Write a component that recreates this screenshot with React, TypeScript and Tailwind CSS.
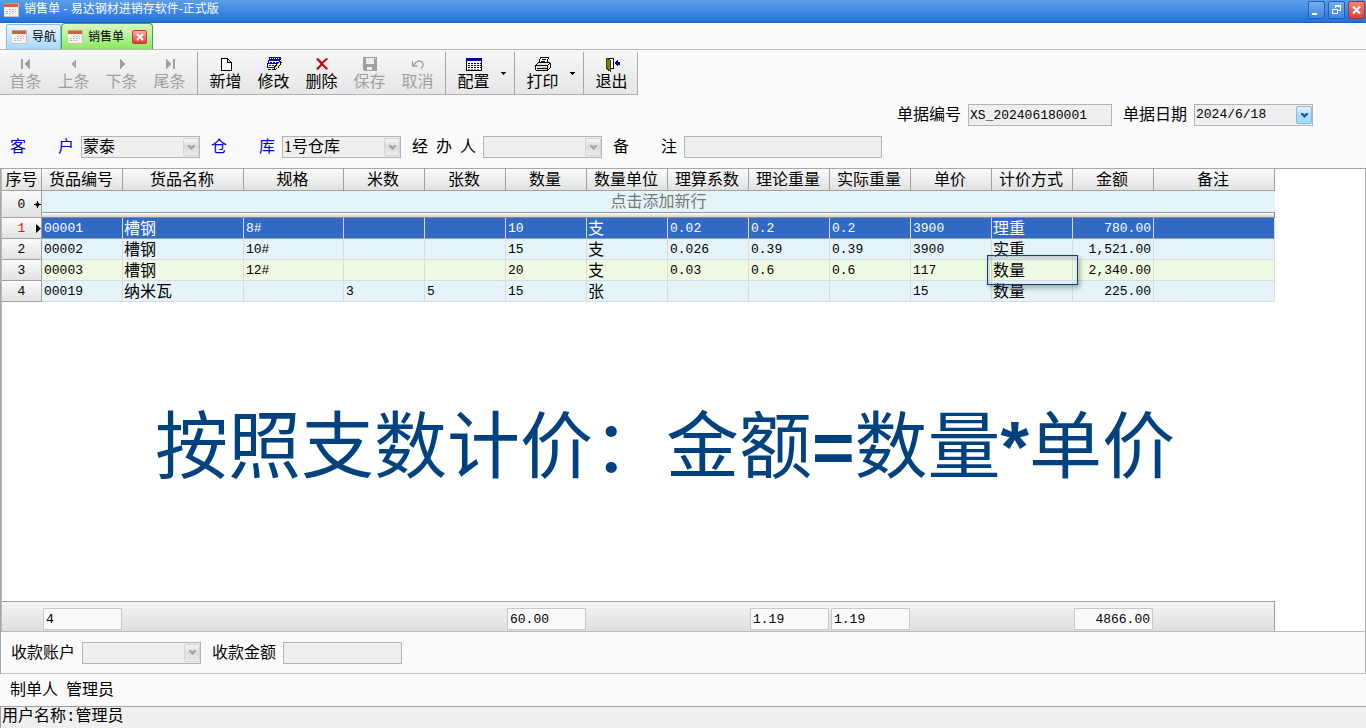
import { useState, type ReactNode } from "react";
import clsx from "clsx";

const mono = "[font-family:'Liberation_Mono','Noto_Sans_CJK_SC',monospace] text-[13px]";

type Column = { key: string; title: string; width: number; align?: "right" };

const columns: Column[] = [
  { key: "code", title: "货品编号", width: 81 },
  { key: "name", title: "货品名称", width: 121 },
  { key: "spec", title: "规格", width: 100 },
  { key: "meters", title: "米数", width: 81 },
  { key: "sheets", title: "张数", width: 81 },
  { key: "qty", title: "数量", width: 81 },
  { key: "unit", title: "数量单位", width: 81 },
  { key: "factor", title: "理算系数", width: 81 },
  { key: "theory", title: "理论重量", width: 81 },
  { key: "actual", title: "实际重量", width: 81 },
  { key: "price", title: "单价", width: 81 },
  { key: "mode", title: "计价方式", width: 81 },
  { key: "amount", title: "金额", width: 81, align: "right" },
  { key: "remark", title: "备注", width: 121 },
];

const rows: Record<string, string>[] = [
  { code: "00001", name: "槽钢", spec: "8#", qty: "10", unit: "支", factor: "0.02", theory: "0.2", actual: "0.2", price: "3900", mode: "理重", amount: "780.00" },
  { code: "00002", name: "槽钢", spec: "10#", qty: "15", unit: "支", factor: "0.026", theory: "0.39", actual: "0.39", price: "3900", mode: "实重", amount: "1,521.00" },
  { code: "00003", name: "槽钢", spec: "12#", qty: "20", unit: "支", factor: "0.03", theory: "0.6", actual: "0.6", price: "117", mode: "数量", amount: "2,340.00" },
  { code: "00019", name: "纳米瓦", meters: "3", sheets: "5", qty: "15", unit: "张", price: "15", mode: "数量", amount: "225.00" },
];

const totals: Record<string, string> = {
  code: "4",
  qty: "60.00",
  theory: "1.19",
  actual: "1.19",
  amount: "4866.00",
};

const isCjk = (text: string) => /[\u4e00-\u9fff]/.test(text);

function FormIcon() {
  return (
    <svg width="16" height="16" viewBox="0 0 16 16" className="shrink-0" shapeRendering="crispEdges">
      <rect x="1" y="1" width="15" height="14" fill="#c8c0ba" />
      <rect x="1" y="1" width="14" height="13" fill="#f7f3ee" />
      <rect x="1" y="1" width="14" height="4" fill="#c9683a" />
      <rect x="1" y="1" width="14" height="1" fill="#dd9468" />
      <path d="M6 7.500h7M3 9.500h10M3 11.500h7" stroke="#b9b4bd" strokeDasharray="2 1" />
    </svg>
  );
}

const icons: Record<string, ReactNode> = {
  first: <path d="M3 3h2v10H3zM12 3v10L6 8z" fill="#a0a0a0" />,
  prev: <path d="M10 3v10L5 8z" fill="#a0a0a0" />,
  next: <path d="M6 3v10l5-5z" fill="#a0a0a0" />,
  last: <path d="M11 3h2v10h-2zM4 3v10l6-5z" fill="#a0a0a0" />,
  add: <path d="M3.500 2.500h6l4 4v8h-10zM9.500 2.500v4h4" fill="#fff" stroke="#000" />,
  edit: (
    <>
      <path d="M3 1h12v3H3z" fill="#0000c8" />
      <path d="M2.500 4.500h11v3h-11zM1.500 7.500h11v4h-11z" fill="#fff" stroke="#0000c8" />
      <path d="M4 2.500h10" stroke="#fff" strokeDasharray="1 1" />
      <path d="M4 6h8M3 9.500h6" stroke="#0000c8" strokeDasharray="2 1" />
      <path d="M2 13.500h7" stroke="#000" strokeDasharray="3 1" />
      <path d="M13.500 5.500l2 1-4 6-3 1 .5-3z" fill="#ffff50" stroke="#000" />
    </>
  ),
  remove: (
    <path d="M2 3l2-1 4 4c2-2 4-4 5-4l1 1-5 4.500 5 5-1.500 1.500L8 9.500 4 14l-2-1 4.500-5z" fill="#c80000" />
  ),
  save: (
    <>
      <path d="M1 1h14v14H2l-1-1z" fill="#a0a0a0" />
      <path d="M4 2h8v6H4zM5 11h5v3H5z" fill="#eee" />
      <path d="M13 2h1v1h-1z" fill="#eee" />
    </>
  ),
  undo: <path d="M2.500 5v5h5M3 9.500l3-3c2-2 5-2 6.500 0 1 2 .5 4-1.500 6" fill="none" stroke="#a0a0a0" strokeWidth="1.300" />,
  config: (
    <>
      <path d="M.5 2.500h15v12H.5z" fill="#fff" stroke="#000" />
      <path d="M0 2h16v3H0z" fill="#0000a0" />
      <path d="M2 7.500h13M2 9.500h13M2 11.500h13" stroke="#000" strokeDasharray="2 1" />
      <path d="M2 13h12" stroke="#777" strokeDasharray="2 1" />
    </>
  ),
  print: (
    <>
      <path d="M5.500 1.500h8l-2 6h-8z" fill="#fff" stroke="#000" />
      <path d="M7 3.500h4M6 5.500h4" stroke="#000" />
      <path d="M.5 9.500l3-3h11l1 1v4l-3 3h-11l-1-1z" fill="#e4e4e4" stroke="#000" />
      <path d="M1 9.500h11l3-2M12.500 10v4M2 12.500h10" stroke="#000" fill="none" />
      <path d="M7 11h3" stroke="#d8d800" />
    </>
  ),
  exit: (
    <>
      <path d="M2.500 2.500h7v10h-7z" fill="#fff" stroke="#000" />
      <path d="M2 2l4 2v11l-4-3z" fill="#808000" stroke="#404000" />
      <path d="M10 7l4-4v3h2v3h-2v2z" fill="#0000a0" />
    </>
  ),
};

function ToolButton({ icon, label, disabled }: { icon: string; label: string; disabled?: boolean }) {
  return (
    <button
      type="button"
      disabled={disabled}
      className={clsx("flex w-12 flex-col items-center pl-px pt-1", disabled ? "text-[#a0a0a0]" : "text-black")}
    >
      <svg
        width="16"
        height="16"
        viewBox="0 0 16 16"
        shapeRendering={icon === "undo" || icon === "remove" ? "auto" : "crispEdges"}
      >
        {icons[icon]}
      </svg>
      <span className="text-base leading-5">{label}</span>
    </button>
  );
}

function DropArrow({ label }: { label: string }) {
  return (
    <button type="button" aria-label={label} className="flex w-[13px] items-center justify-center">
      <svg width="5" height="3" viewBox="0 0 5 3" shapeRendering="crispEdges">
        <path d="M0 0h5L2.500 3z" fill="#000" />
      </svg>
    </button>
  );
}

function Divider() {
  return <span className="ml-1 mr-[3px] w-px bg-[#a8a8a8]" />;
}

function FieldLabel({ id, text, blue }: { id: string; text: string; blue?: boolean }) {
  return (
    <label htmlFor={id} className={clsx("mr-[7px] flex w-16 justify-between", blue && "text-[#0000c8]")}>
      {text.split("").map((char) => (
        <span key={char}>{char}</span>
      ))}
    </label>
  );
}

const boxStyle = "h-[22px] appearance-none rounded-none border border-[#b4b4b4] bg-[#efefef] px-px leading-5 text-black outline-none";

function SelectBox({ id, value, active }: { id: string; value: string; active?: boolean }) {
  return (
    <span className="relative mr-[11px] flex">
      <select id={id} defaultValue={value} className={clsx(boxStyle, "w-[119px]", active && mono)}>
        <option>{value}</option>
      </select>
      <span
        className={clsx(
          "pointer-events-none absolute right-px top-0.5 flex h-[18px] w-4 items-center justify-center rounded-xs border",
          active
            ? "border-[#8ab8e6] bg-linear-to-b from-[#e8f5ff] via-[#b4dcfa] to-[#a0e0fc]"
            : "border-[#d4d4d4] bg-linear-to-b from-[#f6f6f6] via-[#dcdcdc] to-[#ececec]",
        )}
      >
        <svg width="7" height="5" viewBox="0 0 7 5">
          <path d="M0 0h2l1.500 1.500L5 0h2v1.500L3.500 5 0 1.500z" fill={active ? "#1f5fa8" : "#a4a4a4"} />
        </svg>
      </span>
    </span>
  );
}

function Columns() {
  return (
    <colgroup>
      <col className="w-10" />
      {columns.map((column) => (
        <col key={column.key} style={{ width: column.width }} />
      ))}
    </colgroup>
  );
}

const headCell = "border-b border-r border-[#a0a0a0] bg-linear-to-b from-[#fbfbfb] to-[#e2e2e2] p-0 text-center font-normal";

function DetailTable() {
  const [selected, setSelected] = useState(0);

  return (
    <table className="w-[1273px] table-fixed border-separate border-spacing-0 leading-4">
      <Columns />
      <thead>
        <tr className="h-[22px]">
          <th className={headCell}>序号</th>
          {columns.map((column) => (
            <th key={column.key} className={clsx(headCell, "pr-0.5")}>
              {column.title}
            </th>
          ))}
        </tr>
      </thead>
      <tbody>
        <tr className="h-[22px]">
          <th rowSpan={2} className={clsx(headCell, "relative pt-0.5", mono)}>
            0
            <svg width="7" height="7" viewBox="0 0 7 7" className="absolute right-0 top-2.5">
              <circle cx="3.500" cy="3.500" r="2" fill="#000" />
              <path d="M3.500 0v7M0 3.500h7" stroke="#000" />
            </svg>
          </th>
          <td colSpan={14} className="border-b border-[#9a9a9a] bg-[#e5f4f8] p-0 text-center text-[#777]">
            点击添加新行
          </td>
        </tr>
        <tr className="h-[5px]">
          <td colSpan={14} className="border-b border-r border-[#8a8a8a] bg-linear-to-b from-white to-[#d0d0d0] p-0" />
        </tr>
        {rows.map((row, index) => {
          const active = index === selected;
          return (
            <tr
              key={row.code}
              onClick={() => setSelected(index)}
              className={clsx(
                "h-[21px]",
                active ? "bg-[#316ac5] text-white" : index === 2 ? "bg-[#effae2]" : "bg-[#e5f4f8]",
              )}
            >
              <th className={clsx(headCell, "relative pt-0.5", mono, active ? "text-[#e81010]" : "text-black")}>
                {index + 1}
                {active && (
                  <svg width="5" height="9" viewBox="0 0 5 9" className="absolute right-0 top-1.5">
                    <path d="M0 0v9l5-4.500z" fill="#000" />
                  </svg>
                )}
              </th>
              {columns.map((column) => {
                const text = row[column.key] ?? "";
                return (
                  <td
                    key={column.key}
                    className={clsx(
                      "whitespace-nowrap border-b border-r pb-0 pr-0.5 pt-0.5",
                      active ? "border-b-[#8fa0b8] border-r-[#d8dde4]" : "border-[#d8dce0]",
                      column.align === "right" && "text-right",
                      isCjk(text) ? "pl-px" : ["pl-0.5", mono],
                      index === 2 && column.key === "mode" && "relative",
                    )}
                  >
                    {text}
                    {index === 2 && column.key === "mode" && (
                      <span className="absolute -bottom-[5px] -left-[5px] -right-1.5 -top-[5px] border border-[#0b477f] shadow-[2px_3px_5px_rgba(0,0,0,0.3),inset_1px_2px_5px_rgba(0,0,0,0.2)]" />
                    )}
                  </td>
                );
              })}
            </tr>
          );
        })}
      </tbody>
    </table>
  );
}

function TotalsTable() {
  return (
    <table className="w-[1273px] table-fixed border-separate border-spacing-0 border-t border-[#a0a0a0] bg-linear-to-b from-[#f4f4f4] to-[#dfdfdf]">
      <Columns />
      <tbody>
        <tr className="h-[29px]">
          <td className="p-0" />
          {columns.map((column) => (
            <td key={column.key} className="border-[#a0a0a0] px-px py-0 last:border-r">
              {totals[column.key] && (
                <div
                  className={clsx(
                    "mt-1 h-[22px] border border-[#c8c8c8] bg-[#fafafa] px-0.5 leading-[21px]",
                    mono,
                    column.align === "right" && "text-right",
                  )}
                >
                  {totals[column.key]}
                </div>
              )}
            </td>
          ))}
        </tr>
      </tbody>
    </table>
  );
}

export default function App() {
  return (
    <div className="flex min-h-screen flex-col bg-[#fafafa] text-base font-normal leading-5 text-black [font-family:'Liberation_Serif','Noto_Sans_CJK_SC',serif]">
      <header className="flex h-[23px] items-start border-b border-[#1b62bd] bg-linear-to-b from-[#5b9eea] to-[#2272da] pl-[3px] pr-px text-white">
        <span className="mt-0.5">
          <FormIcon />
        </span>
        <h1 className="ml-[5px] flex-1 text-xs font-normal leading-[18px] [font-family:'Liberation_Sans','Noto_Sans_CJK_SC',sans-serif]">
          销售单 - 易达钢材进销存软件-正式版
        </h1>
        <div className="flex gap-[3px] pt-px">
          <button type="button" aria-label="最小化" className="h-[18px] w-[17px] rounded-xs border border-[#1c5fb5] bg-linear-to-b from-[#76aef0] to-[#3f84de]">
            <svg width="15" height="16" viewBox="0 0 15 16">
              <path d="M3 11h5v2H3z" fill="#fff" />
            </svg>
          </button>
          <button type="button" aria-label="还原" className="h-[18px] w-[17px] rounded-xs border border-[#1c5fb5] bg-linear-to-b from-[#76aef0] to-[#3f84de]">
            <svg width="15" height="16" viewBox="0 0 15 16" shapeRendering="crispEdges">
              <path d="M6.500 6V3.500h5v5H9M6 4h6M3.500 7.500h5v4h-5zM3 7h6" fill="none" stroke="#fff" />
            </svg>
          </button>
          <button type="button" aria-label="关闭" className="h-[18px] w-[17px] rounded-xs border border-[#a83038] bg-linear-to-b from-[#f08078] to-[#e03c34]">
            <svg width="15" height="16" viewBox="0 0 15 16">
              <path d="M4 4.500l7 7M11 4.500l-7 7" stroke="#fff" strokeWidth="2.200" />
            </svg>
          </button>
        </div>
      </header>

      <nav className="flex h-[27px] items-end border-b border-[#b8b8b8] pl-1.5 text-xs [font-family:'Liberation_Sans','Noto_Sans_CJK_SC',sans-serif]">
        <button type="button" className="flex h-[25px] w-[55px] items-center gap-[5px] rounded-t-xs border border-b-0 border-[#86b8e8] bg-linear-to-b from-[#eaf6ff] to-[#a8d8ff] pl-1">
          <FormIcon />
          <span className="whitespace-nowrap">导航</span>
        </button>
        <div className="flex h-[26px] w-[92px] items-center rounded-t-sm border border-b-0 border-[#3da848] bg-linear-to-b from-[#d8f8c0] to-[#8ee860] pl-[5px]">
          <FormIcon />
          <button type="button" className="ml-[5px] whitespace-nowrap">
            销售单
          </button>
          <button type="button" aria-label="关闭标签" className="ml-2 flex h-3.5 w-[15px] items-center justify-center rounded-xs border border-[#c83838] bg-linear-to-b from-[#f8a8a0] to-[#e03838]">
            <svg width="8" height="8" viewBox="0 0 8 8">
              <path d="M1 1l6 6M7 1L1 7" stroke="#fff" strokeWidth="2" />
            </svg>
          </button>
        </div>
      </nav>

      <div className="mt-0.5 flex">
        <div role="toolbar" className="flex h-[43px] border-b border-r border-[#b0b0b0] bg-linear-to-b from-[#f6f6f6] to-[#e6e6e6] pl-px pr-0.5">
          <ToolButton icon="first" label="首条" disabled />
          <ToolButton icon="prev" label="上条" disabled />
          <ToolButton icon="next" label="下条" disabled />
          <ToolButton icon="last" label="尾条" disabled />
          <Divider />
          <ToolButton icon="add" label="新增" />
          <ToolButton icon="edit" label="修改" />
          <ToolButton icon="remove" label="删除" />
          <ToolButton icon="save" label="保存" disabled />
          <ToolButton icon="undo" label="取消" disabled />
          <Divider />
          <ToolButton icon="config" label="配置" />
          <DropArrow label="配置选项" />
          <Divider />
          <ToolButton icon="print" label="打印" />
          <DropArrow label="打印选项" />
          <Divider />
          <ToolButton icon="exit" label="退出" />
        </div>
      </div>

      <form onSubmit={(event) => event.preventDefault()}>
        <div className="mt-[9px] flex items-center justify-end pr-[42px]">
          <FieldLabel id="billNo" text="单据编号" />
          <input id="billNo" defaultValue="XS_202406180001" className={clsx(boxStyle, mono, "mr-[11px] w-36")} />
          <FieldLabel id="billDate" text="单据日期" />
          <SelectBox id="billDate" value="2024/6/18" active />
        </div>
        <div className="mt-2.5 flex items-center pl-2.5">
          <FieldLabel id="customer" text="客户" blue />
          <SelectBox id="customer" value="蒙泰" />
          <FieldLabel id="warehouse" text="仓库" blue />
          <SelectBox id="warehouse" value="1号仓库" />
          <FieldLabel id="handler" text="经办人" />
          <SelectBox id="handler" value="" />
          <FieldLabel id="note" text="备注" />
          <input id="note" className={clsx(boxStyle, "w-[198px]")} />
        </div>
      </form>

      <main className="mt-2.5 flex flex-1 flex-col border-x border-t border-[#a8a8a8]">
        <div className="flex flex-1 flex-col overflow-x-auto border-b border-l border-r border-[#b8b8b8] border-r-white bg-white">
          <DetailTable />
          <div className="flex flex-1 items-center justify-center whitespace-nowrap pb-4 pr-9 text-[73px] leading-none text-[#00417f] [font-family:'Noto_Sans_CJK_SC',sans-serif]">
            <p>
              按照支数计价：金额<b className="[font-family:'Liberation_Sans',sans-serif]">=</b>数量
              <b className="[font-family:'Liberation_Sans',sans-serif]">*</b>单价
            </p>
          </div>
          <TotalsTable />
        </div>
        <div className="flex h-[42px] items-center border-b border-[#c0c0c0] pl-2.5">
          <FieldLabel id="account" text="收款账户" />
          <SelectBox id="account" value="" />
          <FieldLabel id="received" text="收款金额" />
          <input id="received" className={clsx(boxStyle, "w-[119px]")} />
        </div>
      </main>

      <div className="flex h-8 items-center gap-2 pl-2.5">
        <span>制单人</span>
        <span>管理员</span>
      </div>
      <footer className="h-[22px] border-l border-t border-[#a0a0a0] bg-[#efefef] pl-px [font-family:'Liberation_Mono','Noto_Sans_CJK_SC',monospace]">
        用户名称:管理员
      </footer>
    </div>
  );
}
